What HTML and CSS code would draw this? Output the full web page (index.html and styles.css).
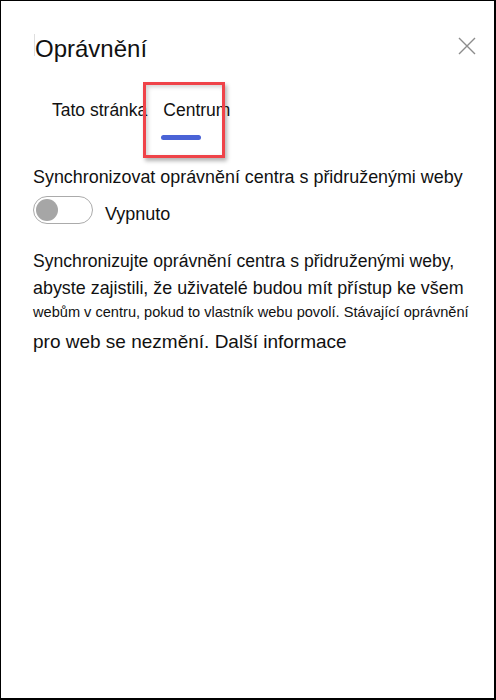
FILE: index.html
```html
<!DOCTYPE html>
<html lang="cs">
<head>
<meta charset="utf-8">
<title>Oprávnění</title>
<link rel="stylesheet" href="styles.css">
</head>
<body>
<div class="panel">
  <div class="header">
    <h1 class="title">Oprávnění</h1>
    <svg class="close" width="18" height="18" viewBox="0 0 18 18" aria-label="Zavřít">
      <path d="M1 1 L17 17 M17 1 L1 17" stroke="#8c8c8c" stroke-width="1.4" fill="none"/>
    </svg>
  </div>
  <div class="tabs">
    <div class="tab">
      <span class="tab-label">Tato stránka</span>
    </div>
    <div class="tab active">
      <span class="tab-label">Centrum</span>
      <span class="indicator"></span>
    </div>
  </div>
  <div class="sync-label">Synchronizovat oprávnění centra s přidruženými weby</div>
  <div class="toggle-row">
    <span class="toggle"><span class="knob"></span></span>
    <span class="toggle-text">Vypnuto</span>
  </div>
  <p class="desc">
    <span class="l1">Synchronizujte oprávnění centra s přidruženými weby,</span>
    <span class="l2">abyste zajistili, že uživatelé budou mít přístup ke všem</span>
    <span class="l3">webům v centru, pokud to vlastník webu povolí. Stávající oprávnění</span>
    <span class="l4">pro web se nezmění. Další informace</span>
  </p>
  <div class="highlight"></div>
</div>
</body>
</html>
```

FILE: styles.css
```css
html, body {
  margin: 0;
  padding: 0;
  background: #fff;
}
body {
  font-family: "Liberation Sans", Arial, sans-serif;
  color: #111;
}
.panel {
  position: relative;
  box-sizing: border-box;
  width: 496px;
  height: 700px;
  border-top: 1px solid #000;
  border-left: 1px solid #000;
  border-right: 2px solid #000;
  border-bottom: 2px solid #000;
  padding: 34px 18px 0 32px;
}
.header {
  display: flex;
  justify-content: space-between;
  align-items: flex-start;
}
.title {
  position: relative;
  margin: 0;
  font-size: 24px;
  font-weight: normal;
  line-height: 28px;
  padding-left: 2px;
}
.title::before {
  content: "";
  position: absolute;
  left: 1px;
  top: -1px;
  width: 1px;
  height: 22px;
  background: #dedede;
}
.close {
  margin-top: 2px;
  display: block;
}
.tabs {
  display: flex;
  gap: 16px;
  margin-top: 35px;
  padding-left: 19px;
  height: 42px;
}
.tab {
  display: flex;
  flex-direction: column;
  align-items: flex-start;
}
.tab-label {
  font-size: 17.5px;
  line-height: 24px;
  white-space: nowrap;
}
.indicator {
  display: block;
  width: 40px;
  height: 5px;
  border-radius: 3px;
  background: #4a63d6;
  margin-top: 13px;
  margin-left: -2px;
}
.sync-label {
  margin-top: 25px;
  font-size: 17.9px;
  line-height: 24px;
  white-space: nowrap;
}
.toggle-row {
  display: flex;
  align-items: flex-start;
  gap: 12px;
  margin-top: 7px;
}
.toggle {
  box-sizing: border-box;
  width: 60px;
  height: 28px;
  border: 1px solid #ababab;
  border-radius: 14px;
  display: flex;
  align-items: center;
  padding-left: 2px;
}
.knob {
  width: 22px;
  height: 22px;
  border-radius: 50%;
  background: #a6a6a6;
}
.toggle-text {
  font-size: 18px;
  line-height: 24px;
  margin-top: 6px;
}
.desc {
  margin: 22px 0 0 0;
}
.desc span {
  display: block;
  white-space: nowrap;
}
.l1 {
  font-size: 17.6px;
  line-height: 27px;
}
.l2 {
  font-size: 17.9px;
  line-height: 27px;
}
.l3 {
  font-size: 14.6px;
  line-height: 20px;
}
.l4 {
  font-size: 19px;
  line-height: 39px;
}
.highlight {
  position: absolute;
  left: 142px;
  top: 81px;
  width: 82px;
  height: 76px;
  box-sizing: border-box;
  border: 3px solid #ef4349;
  box-shadow: 2px 3px 4px rgba(0, 0, 0, 0.3), inset 2px 2px 4px rgba(0, 0, 0, 0.18);
}
```
